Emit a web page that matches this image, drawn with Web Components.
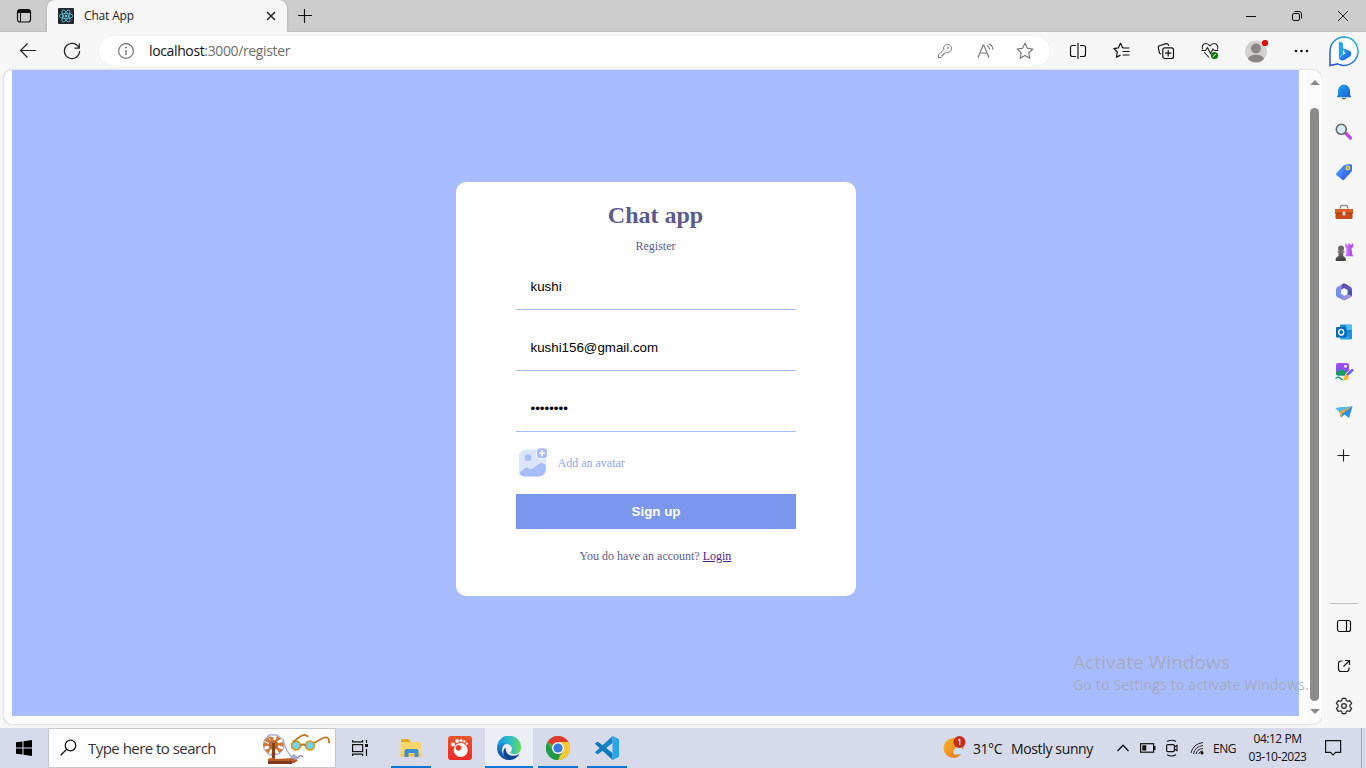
<!DOCTYPE html>
<html lang="en">
<head>
<meta charset="utf-8">
<title>Chat App</title>
<style>
html,body{margin:0;height:100%;overflow:hidden}
body{font-family:"Open Sans","Noto Sans",sans-serif;color:#1b1b1b}
</style>
</head>
<body>
<desktop-screen></desktop-screen>
<script>
const ICONS = {
  workspaces:[16,16,`<rect x="1.5" y="1.5" width="13" height="12.5" rx="2.5" fill="none" stroke="#111" stroke-width="1.2"/><path d="M1.5 5V4a2.500 2.500 0 0 1 2.500-2.500h8A2.500 2.500 0 0 1 14.500 4v1z" fill="#111"/><path d="M4.500 5v9" stroke="#111"/>`],
  react:[16,16,`<rect width="16" height="16" rx="1" fill="#22252b"/><g fill="none" stroke="#5ccbe8" stroke-width=".8"><ellipse cx="8" cy="8" rx="6.800" ry="2.600"/><ellipse cx="8" cy="8" rx="6.800" ry="2.600" transform="rotate(60 8 8)"/><ellipse cx="8" cy="8" rx="6.800" ry="2.600" transform="rotate(120 8 8)"/></g><circle cx="8" cy="8" r="1.300" fill="#5ccbe8"/>`],
  close:[10,10,`<path d="M1 1l8 8M9 1L1 9" stroke="#111" stroke-width="1.200"/>`],
  plus:[14,14,`<path d="M6.500 0v14M0 6.500h14" stroke="#111" stroke-width="1.100"/>`],
  minimize:[12,12,`<path d="M1 6.500h10" stroke="#111"/>`],
  restore:[12,12,`<rect x="1.500" y="3.500" width="7" height="7" rx="1.500" fill="none" stroke="#111"/><path d="M3.500 1.500H8a2.500 2.500 0 0 1 2.500 2.500v4.500" fill="none" stroke="#111"/>`],
  winclose:[12,12,`<path d="M1 1l10 10M11 1L1 11" stroke="#111"/>`],
  back:[18,16,`<path d="M17 7.500H2M8.500.5l-7 7 7 7" fill="none" stroke="#222" stroke-width="1.150"/>`],
  reload:[18,18,`<path d="M15.800 5.500A7.600 7.600 0 1 0 16.600 9M16.300 1.500v4.700h-4.800" fill="none" stroke="#222" stroke-width="1.250"/>`],
  info:[18,18,`<circle cx="9" cy="9" r="7.400" fill="none" stroke="#6b6b6b" stroke-width="1.100"/><path d="M9 8v5" stroke="#6b6b6b" stroke-width="1.300"/><circle cx="9" cy="5.500" r=".9" fill="#6b6b6b"/>`],
  key:[16,16,`<path d="M8.800 1.900a4 4 0 1 1 1.400 7.600l-.9-.3-1 1.200H6.700V12H5v1.700l-.8.800H1.500v-2.700l5.100-5.100A4 4 0 0 1 8.800 1.900z" fill="none" stroke="#7b7b7b" stroke-linejoin="round"/><circle cx="11" cy="5" r=".9" fill="#7b7b7b"/>`],
  read:[18,16,`<path d="M2 14.500L7.200 2h.6L13 14.500M3.800 10h7.400" fill="none" stroke="#777" stroke-width="1.150"/><path d="M11 2.500c1.600.7 2.500 2.100 2.600 4M12.700.8c2.700 1.100 4.100 3.200 4.200 5.900" fill="none" stroke="#777" stroke-width="1.100"/>`],
  star:[18,18,`<path d="M9 1.300l2.400 5 5.400.7-4 3.800 1 5.500L9 13.600l-4.800 2.700 1-5.500-4-3.800 5.400-.7z" fill="none" stroke="#707070" stroke-linejoin="round" stroke-width="1.100"/>`],
  split:[18,18,`<path d="M7 3.500H3.500a2 2 0 0 0-2 2v7a2 2 0 0 0 2 2H7M9 1v16M11 3.500h3.500a2 2 0 0 1 2 2v7a2 2 0 0 1-2 2H11" fill="none" stroke="#111" stroke-width="1.150"/>`],
  favs:[18,18,`<path d="M16.500 6H11l-1.300-.3L7.500 1.300 5.300 5.900l-4.400.7 3.400 3.400-.8 5.200 4-2.100" fill="none" stroke="#111" stroke-linejoin="round" stroke-width="1.200"/><path d="M9.500 9.500h7M9.500 13h7" stroke="#111" stroke-width="1.200"/>`],
  collections:[18,18,`<rect x="5.800" y="5.800" width="10.700" height="10.700" rx="2" fill="none" stroke="#111" stroke-width="1.200"/><path d="M11.200 8v6.400M8 11.200h6.400M4 12l-1.500-.8L1.300 5.700c-.2-1 .2-1.800 1.200-2l6.600-2c1.200-.2 1.900.2 2.200 1.200l.3 1" fill="none" stroke="#111" stroke-width="1.200"/>`],
  heart:[20,20,`<path d="M2.500 8.500c-1.200-3 .6-6 3.400-6C8 2.500 9 3.800 10 5c1-1.200 2-2.500 4.100-2.500 3 0 4.600 3.200 3.400 6M4 11l5 5.500" fill="none" stroke="#222" stroke-width="1.100"/><path d="M1.500 9.500h4l2-3 3 6L13 8l1.300 1.500h4" fill="none" stroke="#222" stroke-width="1.100"/><circle cx="14.500" cy="14.500" r="3.600" fill="#0f7b0f"/><path d="M12.900 15.700l3-2.600" fill="none" stroke="#fff"/>`],
  profile:[26,26,`<defs><clipPath id="c"><circle cx="13" cy="13.500" r="11"/></clipPath></defs><circle cx="13" cy="13.500" r="11" fill="#d2d0ce"/><g clip-path="url(#c)" fill="#8a8886"><circle cx="13" cy="10.500" r="5"/><ellipse cx="13" cy="21.500" rx="8" ry="4.800"/></g><circle cx="22" cy="5" r="3.100" fill="#e60000"/>`],
  dots:[16,4,`<g fill="#111"><circle cx="3" cy="2" r="1.300"/><circle cx="8.500" cy="2" r="1.300"/><circle cx="14" cy="2" r="1.300"/></g>`],
  bing:[32,34,`<defs><linearGradient id="g" x1="1" x2="0" y2="1"><stop stop-color="#25b7e8"/><stop offset="1" stop-color="#2b4fd0"/></linearGradient><linearGradient id="h" x2="1" y2="1"><stop stop-color="#35b5f5"/><stop offset="1" stop-color="#1554e0"/></linearGradient></defs><path d="M16 2a14.200 14.200 0 1 1-6.500 26.900L2 30.500V16A14.200 14.200 0 0 1 16 2z" fill="#fff" stroke="url(#g)" stroke-width="1.500"/><path d="M10.800 6.200l4.200 1.800v11.500l-4.200 3z" fill="#25a5ee"/><path d="M10.800 22.500l4.200-2.800 3-1.600-2-1-1.600-4 6.600 2.500c3 1.300 3 4.900.4 6.300l-6 3.500c-2 .8-4.400-.9-4.400-2.900z" fill="url(#h)"/>`],
  bell:[16,18,`<defs><linearGradient id="g" x2="1" y2="1"><stop stop-color="#23a9f0"/><stop offset="1" stop-color="#1660d8"/></linearGradient></defs><path d="M2 8a6 6.500 0 0 1 12 0v3.500l1 2v.8H1v-.8l1-2z" fill="url(#g)"/><path d="M5.500 15h5a2.600 1.900 0 0 1-5 0z" fill="#5d5d5d"/>`],
  search:[18,18,`<path d="M11 10.500l4.500 4.500" stroke="#bd45ef" stroke-width="3.200" stroke-linecap="round"/><circle cx="6.300" cy="6.300" r="5" fill="#d3eefb" stroke="#666" stroke-width="1.600"/>`],
  tag:[18,18,`<defs><linearGradient id="g" x2="1" y2="1"><stop stop-color="#4eb1ff"/><stop offset="1" stop-color="#3346ef"/></linearGradient></defs><path d="M9 2l6.500-1 1.500.8V8l-7.800 8.800c-.6.600-1.300.6-2 0L1.500 12c-.6-.6-.6-1.400 0-2z" fill="url(#g)"/><circle cx="13" cy="5" r="1.600" fill="#4069c8" stroke="#fbd936" stroke-width="1.500"/>`],
  toolbox:[20,18,`<path d="M6.500 5.500v-2a1 1 0 0 1 1-1h5a1 1 0 0 1 1 1v2" fill="none" stroke="#929292" stroke-width="1.500"/><rect x="1.500" y="6" width="17" height="10" rx="1.300" fill="#cc4817"/><path d="M1 6h18v4H1z" fill="#e25c26"/><path d="M1 10.100h18" stroke="#8f2c0c" stroke-width=".8"/><rect x="8.500" y="8.500" width="3" height="4" rx="1" fill="#c8d4d9"/>`],
  games:[20,20,`<defs><linearGradient id="g" x2="0" y2="1"><stop stop-color="#7a7a7a"/><stop offset="1" stop-color="#3b3b3b"/></linearGradient><linearGradient id="h" x2="1"><stop stop-color="#d68bff"/><stop offset="1" stop-color="#a438ee"/></linearGradient></defs><path d="M11 1.500h1.700V3h1.500V1.500h1.900V3h1.500V1.500H19V5l-1.500 1.200.6 5.800 1 2.200h-8l1-2.200.4-5.800L11 5z" fill="url(#h)"/><circle cx="7" cy="6.500" r="3" fill="#666"/><path d="M3.500 9h7v1.400H9.300v3.300l2.200 2.300q1 3-.5 3H2.500q-1.500 0-.5-3l2.500-2.300v-3.300h-1z" fill="url(#g)"/>`],
  m365:[18,18,`<defs><linearGradient id="a" x2="0" y2="1"><stop stop-color="#9a86e6"/><stop offset="1" stop-color="#5c9be8"/></linearGradient><linearGradient id="b" x2="1" y2="1"><stop stop-color="#4f46a8"/><stop offset="1" stop-color="#7a63cf"/></linearGradient><linearGradient id="d" x2="1"><stop stop-color="#5b8fe6"/><stop offset="1" stop-color="#c58de6"/></linearGradient></defs><path d="M8.600.6L6.400 6.200V10L1 12.600V6q0-1.400 1.200-2.100L7.400.9z" fill="url(#a)"/><path d="M7.600.8Q9 .1 10.400.8l5.400 3.100Q17 4.600 17 6v4.700l-4.900-3.600L8.900 5.200 6 6.800z" fill="url(#b)"/><path d="M17 7v5q0 1.400-1.200 2.100l-4.300 2.500 1-4.400V7.300z" fill="#45559c"/><path d="M1 12.300l5.300-2.400 2.800 2.900 3.600-1.500L16.600 13l-.8 1-5.400 3.100q-1.400.7-2.800 0l-5.400-3.100q-.9-.5-1.200-1.700z" fill="url(#d)"/><path d="M9.200 5.300l3 1.800v3.700L9.200 12.600 6.200 10.800V7.100z" fill="#f7f7f7"/>`],
  outlook:[18,18,`<rect x="5" y="1.500" width="12" height="14.500" rx="1" fill="#138bd4"/><path d="M11 2h6v5h-6z" fill="#46c4f4"/><path d="M5 8l6 4 6-4v7.500q0 1-1 1H6q-1 0-1-1z" fill="#28a8ea"/><path d="M11 12l6-4v8z" fill="#1f93d8"/><rect x="1" y="4" width="10.500" height="10.500" rx="1" fill="#0968ba"/><ellipse cx="6.200" cy="9.200" rx="2.500" ry="2.800" fill="none" stroke="#fff" stroke-width="1.400"/>`],
  designer:[20,20,`<defs><linearGradient id="g" x2="0" y2="1"><stop stop-color="#a44ff2"/><stop offset="1" stop-color="#6c55e8"/></linearGradient></defs><rect x="2" y="1" width="13" height="12.500" rx="2" fill="url(#g)"/><circle cx="11.500" cy="4.300" r="1.400" fill="#fff"/><path d="M2 11l4-3.200q1.300-1 2.600 0L13 11.500l-2.500 2H4q-2 0-2-2z" fill="#169b65"/><path d="M1.500 16.500q2.500-2.500 4-.7t3.500 1.700" fill="none" stroke="#20a871" stroke-width="1.400"/><path d="M13 13L18.300 8.200" stroke="#f7f7f7" stroke-width="4" stroke-linecap="round"/><path d="M13 13L18.300 8.200" stroke="#6d62e9" stroke-width="2.500" stroke-linecap="round"/><path d="M12 11.800l3 3c-.8 3-3.200 4-6 3.700 1.300-1 .8-4.900 3-6.700z" fill="#fbb52b"/>`],
  plane:[18,18,`<path d="M.5 5l17-1.500L14 15l-4.500-3.500-3.700 3.300-.8-5z" fill="#2b8ee8"/><path d="M.5 5l17-1.500L5 9.300z" fill="#53b9f5"/><path d="M17.500 3.500L4.300 8.700l1.500 6 1.800-4.500z" fill="#f4a72b"/>`],
  addapp:[14,14,`<path d="M6.500.5v12M.5 6.500h12" stroke="#222" stroke-width="1.100"/>`],
  sidepanel:[16,16,`<rect x="1.500" y="2.500" width="13" height="11" rx="2" fill="none" stroke="#111" stroke-width="1.200"/><path d="M10.500 2.500v11" stroke="#111" stroke-width="1.200"/>`],
  open:[16,16,`<path d="M6.500 3H5a2.500 2.500 0 0 0-2.500 2.500V11A2.500 2.500 0 0 0 5 13.500h5.500A2.500 2.500 0 0 0 13 11V9.500M9 2.500h4.500V7M13.500 2.500L7.500 8.500" fill="none" stroke="#111" stroke-width="1.200"/>`],
  gear:[18,18,`<path d="M7.300 1.300h3.400l.5 2.200 1.400.8 2.200-.7 1.800 3-1.700 1.500v1.800l1.700 1.500-1.800 3-2.200-.7-1.400.8-.5 2.200H7.300l-.5-2.200-1.400-.8-2.200.7-1.800-3 1.700-1.500V8.100L1.400 6.600l1.800-3 2.200.7 1.400-.8z" fill="none" stroke="#222" stroke-width="1.200" stroke-linejoin="round"/><circle cx="9" cy="9" r="2.300" fill="none" stroke="#222" stroke-width="1.200"/>`],
  avatar:[32,32,`<rect x="3" y="2.500" width="27" height="27" rx="7" fill="#dce5ff"/><path d="M3 26l6.500-5q1.800-1 3.500.5t4-.3l6.500-4.700q2-1.200 4 0l2.200 1.500V22.500a7 7 0 0 1-7 7H10a7 7 0 0 1-7-3.500z" fill="#a7bcff"/><circle cx="12" cy="10.800" r="3.300" fill="#a7bcff"/><rect x="20.500" y=".800" width="11" height="11" rx="3.500" fill="#a7bcff" stroke="#fff"/><path d="M26 3.300v6M23 6.300h6" stroke="#fff" stroke-width="1.600"/>`],
  windows:[16,16,`<path d="M0 2.300l6.500-.9v6.100H0zM7.500 1.300L16 0v7.500H7.500zM0 8.500h6.500v6.100L0 13.700zM7.500 8.500H16V16l-8.500-1.300z" fill="#000"/>`],
  lens:[18,18,`<circle cx="10.500" cy="6.500" r="5.300" fill="none" stroke="#111" stroke-width="1.200"/><path d="M6.700 10.300l-6 6" stroke="#111" stroke-width="1.300"/>`],
  charkha:[70,32,`<g stroke="#aab3d5" stroke-width="1.300" fill="none"><path d="M8 2l8 0 6 5 1 8-5 6-9 1-6-6V8z"/><path d="M22 6q3 13 9 18"/></g><g fill="#cf7a3c"><path d="M11 10L7 3l6 1.500zM13 10l3-7 4 3zM14 11l8-2 .5 5zM14 13l8 4-4 3zM13 14l2 8-5-.5zM11 14l-4 7-3-4zM10 12l-8 2 .500-5zM11 11L3 8l4-4z"/></g><circle cx="12.500" cy="12" r="5" fill="#c06c31"/><path d="M11 10h3v17h-3z" fill="#874019"/><path d="M7 26q4-2 8 0l18-1q3 1 4 2.500l-4 2.500H7z" fill="#b95b25"/><path d="M7 28h24v3H7z" fill="#81391d"/><path d="M29 24l4-3 5 4-4 2z" fill="#a3a4d8"/><path d="M37 25q2-4 5-1" fill="none" stroke="#9984ba" stroke-width="1.300"/><g fill="#73d4f2" stroke="#d29b22" stroke-width="1.800"><circle cx="35" cy="12.500" r="4.400"/><circle cx="49" cy="12.500" r="4.400"/></g><path d="M39.500 12.500q2.500-2 5 0M32 9l8-6q5-2.500 7 1M53 10L62 5q6-2 6 3v2" fill="none" stroke="#b97a2a" stroke-width="1.800"/>`],
  taskview:[18,18,`<g fill="none" stroke="#111" stroke-width="1.200"><rect x="1.600" y="5.600" width="10" height="7"/><path d="M1.600 1v1.900h10V1M1.600 17v-1.900h10V17M15.500 1v3M15.500 10v7"/></g><path d="M14 5h3v3h-3z" fill="#111"/>`],
  explorer:[24,24,`<path d="M2 4.500q0-1.500 1.500-1.500h6L11.500 6v4H2z" fill="#dea51f"/><path d="M1.500 6H21q1.500 0 1.500 1.500v13H1.500z" fill="#fbd668"/><path d="M1.500 18h21v2.500h-21z" fill="#f6c64c"/><path d="M5.500 21v-6q0-2 2-2h10q2 0 2 2v6h-4v-4h-6v4z" fill="#3a8fd5"/>`],
  gom:[24,24,`<defs><linearGradient id="g" x2="0" y2="1"><stop stop-color="#ee5527"/><stop offset="1" stop-color="#ee2828"/></linearGradient></defs><rect width="24" height="24" rx="3" fill="url(#g)"/><g fill="#fff"><circle cx="12.700" cy="14" r="7"/><circle cx="5" cy="8.500" r="2"/><circle cx="9" cy="5" r="1.900"/><circle cx="13" cy="4.500" r="1.600"/><circle cx="16.300" cy="5.500" r="1.300"/><circle cx="18.800" cy="7.700" r="1.100"/></g><circle cx="10.500" cy="11.700" r="2.800" fill="#ee3d2b"/>`],
  edge:[24,24,`<defs><linearGradient id="g" x2="1"><stop stop-color="#1893dd"/><stop offset=".55" stop-color="#2bbfc9"/><stop offset="1" stop-color="#66da58"/></linearGradient><linearGradient id="h" x2="0" y2="1"><stop stop-color="#1788d4"/><stop offset="1" stop-color="#0f4ba0"/></linearGradient></defs><path d="M0 11A12 12 0 0 1 24 12c0 4-3 6-6.500 6-3 0-4.500-1-3.600-2.300 2.700-4-.4-7.700-4.400-7.700C5 8 1.500 9.500 0 11z" fill="url(#g)"/><path d="M0 12C1 8.500 5 6.800 9 7.500c-3.400 2-4.500 5-3.700 8.600 1 4 4.500 6.800 8.200 7.800A12 12 0 0 1 0 12z" fill="url(#h)"/><path d="M8.800 11.500c-1.200 4.500 3 9 8.200 8.300 2-.2 3.700-.8 5.500-1.800A12 12 0 0 1 13 24C6 22.600 4.200 15 8.800 11.500z" fill="#0c458f"/>`],
  chrome:[24,24,`<circle cx="12" cy="12" r="12" fill="#4caf50"/><path d="M12 12L1.600 6A12 12 0 0 1 22.400 6z" fill="#e33b2e"/><path d="M12 6h10.400A12 12 0 0 1 12 24l5.200-9z" fill="#fcc934"/><path d="M1.600 6l5.200 9 5.200 3 2-.3L12 24A12 12 0 0 1 1.600 6z" fill="#23994b"/><circle cx="12" cy="12" r="6" fill="#fff"/><circle cx="12" cy="12" r="4.600" fill="#3478e5"/>`],
  vscode:[24,24,`<path d="M17.500 0v7L3 18.300l-1.500-.5L0 16.300z" fill="#1483c8"/><path d="M17.500 24v-7L3 5.700l-1.500.5L0 7.700z" fill="#087abd"/><path d="M17.500 0L24 3v18l-6.500 3z" fill="#28a6ec"/>`],
  weather:[24,24,`<defs><linearGradient id="g" x2="1" y2="1"><stop stop-color="#f8b52e"/><stop offset="1" stop-color="#e87412"/></linearGradient></defs><circle cx="10.500" cy="12" r="10" fill="url(#g)"/><path d="M12 18.500a3 3 0 0 1 0-5.500 4 4 0 0 1 7.500.3 2.700 2.700 0 0 1 1 5.200z" fill="#cae1fa"/><circle cx="16.500" cy="6" r="6" fill="#c42b1c"/><path d="M15 4.300L16.800 3v6" fill="none" stroke="#fff"/>`],
  chevron:[14,10,`<path d="M1.500 8L7 2.300 12.500 8" fill="none" stroke="#111" stroke-width="1.300"/>`],
  battery:[16,10,`<rect x=".600" y=".700" width="13" height="8.500" fill="none" stroke="#111" stroke-width="1.200"/><path d="M2.300 2.300h4v5.300h-4zM14 3h1.500v4H14z" fill="#111"/>`],
  meet:[14,18,`<rect x="1.600" y="5.600" width="7.800" height="7" rx="1.300" fill="none" stroke="#111" stroke-width="1.200"/><path d="M9.500 8l2.500-1.700v5.500L9.500 10M2 2.500q5-2.500 9 0M2 15.700q5 2.500 9 0" fill="none" stroke="#111" stroke-width="1.100"/>`],
  wifi:[14,14,`<g fill="none" stroke="#222" stroke-width="1"><path d="M1 12Q3 3 13 1.500M3.500 13Q5 5.500 13 4.500M6 13q1-5 7-5.500M8.500 13q.8-2.700 4.500-3"/></g><circle cx="12" cy="12" r="1.500" fill="#111"/>`],
  notify:[18,18,`<path d="M1.600 1.600h15v11.800h-5L9 16l-2.500-2.600H1.600z" fill="none" stroke="#111" stroke-width="1.200"/>`]
};

/* Shared base: every component renders its own template into an open root. */
class Base extends HTMLElement{
  connectedCallback(){
    if(this.shadowRoot) return;
    const t=document.createElement('template');
    t.innerHTML=this.render();
    this.attachShadow({mode:'open'}).append(t.content.cloneNode(true));
    this.ready?.();
  }
}
customElements.define('ui-icon',class extends Base{
  render(){
    const [w,h,body]=ICONS[this.getAttribute('name')];
    return `<style>:host{display:block;flex:none;width:${w}px;height:${h}px}svg{display:block}</style><svg width="${w}" height="${h}" viewBox="0 0 ${w} ${h}">${body}</svg>`;
  }
});
/* One line of text tracked so it fills the width given in "w". */
customElements.define('ui-text',class extends Base{
  render(){return `<style>:host{display:block;flex:none;white-space:nowrap;width:${this.getAttribute('w')}px}span{display:inline-block}</style><span><slot></slot></span>`}
  ready(){
    const s=this.shadowRoot.querySelector('span');
    const n=this.textContent.length;
    s.style.letterSpacing=((+this.getAttribute('w')-s.getBoundingClientRect().width)/n)+'px';
  }
});
customElements.define('icon-cell',class extends Base{
  render(){return `<style>:host{display:grid;place-items:center;flex:none;width:${this.getAttribute('w')||44}px;height:${this.getAttribute('h')||40}px}</style><ui-icon name="${this.getAttribute('name')}"></ui-icon>`}
});
customElements.define('tab-strip',class extends Base{
  render(){return `<style>
  :host{display:flex;height:32px;background:#cdcdcd;align-items:center;box-shadow:inset 0 -1px #c0c0c0}
  .tab{display:flex;align-items:center;height:32px;width:240px;margin-left:-1px;background:#f7f7f7;border-radius:8px 8px 0 0;box-sizing:border-box;padding:0 11px;font-size:12px;box-shadow:0 0 2px #999;clip-path:inset(0 -3px 0 -3px)}
  .tab ui-text{margin-left:10px;line-height:32px}.tab ui-icon:last-child{margin:0 0 0 auto}
  .end{display:flex;margin-left:auto}
  </style><icon-cell name="workspaces" w="48" h="32"></icon-cell><div class="tab"><ui-icon name="react"></ui-icon><ui-text w="50">Chat App</ui-text><ui-icon name="close"></ui-icon></div><icon-cell name="plus" w="36" h="32"></icon-cell><div class="end"><icon-cell name="minimize" w="46" h="32"></icon-cell><icon-cell name="restore" w="46" h="32"></icon-cell><icon-cell name="winclose" w="46" h="32"></icon-cell></div>`}
});
customElements.define('address-bar',class extends Base{
  render(){return `<style>
  :host{display:flex;align-items:center;width:951px;height:30px;border-radius:15px;background:#fff;box-shadow:0 0 1px #ddd;box-sizing:border-box;padding:0 5px 0 18px;flex:none;font-size:14px;color:#6d6d6d}
  ui-text{margin-left:14px;line-height:30px}b{font-weight:400;color:#111}.end{display:flex;margin-left:auto}
  </style><ui-icon name="info"></ui-icon><ui-text w="141"><b>localhost</b>:3000/register</ui-text><div class="end"><icon-cell name="key" w="40" h="30"></icon-cell><icon-cell name="read" w="40" h="30"></icon-cell><icon-cell name="star" w="40" h="30"></icon-cell></div>`}
});
customElements.define('tool-bar',class extends Base{
  render(){return `<style>
  :host{display:flex;align-items:center;height:38px;box-sizing:border-box;padding-left:6px;background:#f7f7f7}
  address-bar{margin:0 5px 0 5px}
  </style><icon-cell name="back" h="38"></icon-cell><icon-cell name="reload" h="38"></icon-cell><address-bar></address-bar><icon-cell name="split" w="45" h="38"></icon-cell><icon-cell name="favs" h="38"></icon-cell><icon-cell name="collections" h="38"></icon-cell><icon-cell name="heart" h="38"></icon-cell><icon-cell name="profile" w="48" h="38"></icon-cell><icon-cell name="dots" w="42" h="38"></icon-cell>`}
});
customElements.define('form-field',class extends Base{
  render(){return `<style>:host{display:block;height:50px;border-bottom:1px solid #a7bcff;padding:0 15px;font:13.333px/55px "Liberation Sans",Arial,sans-serif;color:#000}</style><slot></slot>`}
});
customElements.define('register-card',class extends Base{
  render(){return `<style>
  :host{display:flex;flex-direction:column;width:400px;height:414px;box-sizing:border-box;padding:20px 60px;background:#fff;border-radius:10px;font:12px "Liberation Serif","Times New Roman",serif;color:#5d5b8d}
  h1{margin:0;font-size:24px;line-height:27px;text-align:center}
  .sub{line-height:14px;margin:10px 0 6px;text-align:center}
  form-field{margin-bottom:10px}
  .avatar{display:flex;align-items:center;gap:10px;height:32px;margin-top:5px;color:#8da4f1}
  button{display:block;border:0;margin:15px 0 0;height:35px;padding:0 0 0 1px;background:#7b96ec;color:#fff;font:bold 13.333px "Liberation Sans",Arial,sans-serif}
  p{margin:20px 0 0;line-height:14px;text-align:center}a{color:#551a8b}
  </style><h1>Chat app</h1><div class="sub">Register</div><form-field>kushi</form-field><form-field>kushi156@gmail.com</form-field><form-field>••••••••</form-field><div class="avatar"><ui-icon name="avatar"></ui-icon><span>Add an avatar</span></div><button>Sign up</button><p>You do have an account? <a href="#">Login</a></p>`}
});
customElements.define('scroll-track',class extends Base{
  render(){return `<style>:host{display:flex;flex-direction:column;align-items:center;width:15px;box-sizing:border-box;padding:10px 0 10px;background:#fcfcfc}
  i{display:block;border:5px solid transparent;border-top:0;border-bottom:5px solid #8b8b8b}
  i.d{border-top:5px solid #8b8b8b;border-bottom:0}
  div{flex:1;width:9px;border-radius:5px;background:#8b8b8b;margin:23px 0 8px}</style><i></i><div></div><i class="d"></i>`}
});
customElements.define('web-page',class extends Base{
  render(){return `<style>
  :host{display:flex;margin-left:4px;width:1318px;height:654px;background:#fff;border-radius:8px 10px 10px 8px;box-shadow:0 0 2px #aaa;overflow:hidden}
  main{display:flex;justify-content:center;align-items:flex-start;box-sizing:border-box;width:1287px;height:646px;margin:0 8px;padding-top:112px;background:#a7bcff}
  </style><main><register-card></register-card></main><scroll-track></scroll-track>`}
});
customElements.define('side-bar',class extends Base{
  render(){
    const cell=n=>`<icon-cell name="${n}"></icon-cell>`;
    return `<style>:host{display:flex;flex-direction:column;width:44px;background:#f7f7f7}
    .top{margin-bottom:4px}hr{width:28px;height:1px;border:0;background:#bdbdbd;margin:auto 8px 2px}.end{padding-bottom:2px}</style>
    <icon-cell name="bing" h="40"></icon-cell><div class="top">${['bell','search','tag','toolbox','games','m365','outlook','designer','plane'].map(cell).join('')}</div>${cell('addapp')}<hr><div class="end">${['sidepanel','open','gear'].map(cell).join('')}</div>`}
});
customElements.define('task-app',class extends Base{
  render(){const on=this.hasAttribute('active');const run=this.hasAttribute('running');
  return `<style>:host{display:flex;flex-direction:column;align-items:center;justify-content:space-between;width:49px;height:40px;background:${on?'linear-gradient(90deg,transparent 1px,#eceef6 1px)':'none'};flex:none}ui-icon{margin-top:8px}i{height:2px;width:${on?'48px;align-self:flex-end':'40px'};background:${run?'#0b76d4':'none'}}</style><ui-icon name="${this.getAttribute('name')}"></ui-icon><i></i>`}
});
customElements.define('search-box',class extends Base{
  render(){return `<style>:host{display:flex;align-items:center;width:288px;height:40px;box-sizing:border-box;border:1px solid #c4c6cc;background:#fff;padding:0 4px 0 11px;font-size:15px;color:#333;flex:none}ui-text{margin-left:10px}ui-icon:last-child{margin-left:auto;margin-top:1px}</style><ui-icon name="lens"></ui-icon><ui-text w="128">Type here to search</ui-text><ui-icon name="charkha"></ui-icon>`}
});
customElements.define('task-bar',class extends Base{
  render(){return `<style>
  :host{display:flex;align-items:center;height:40px;background:#d6daea;font-size:14px;color:#111}
  .apps{display:flex;margin-left:2px}.tray{display:flex;align-items:center;margin-left:auto}
  .temp{margin-left:6px}.cond{margin:0 18px 0 9px}.lang{font-size:12px;margin-left:4px}
  .clock{font-size:12px;line-height:18px;width:59px;display:grid;justify-items:center;margin:0 2px 0 12px}
  .edge{width:4px;height:40px;border-left:1px solid #9fa4b5;margin-left:4px}
  </style><icon-cell name="windows" w="48"></icon-cell><search-box></search-box><icon-cell name="taskview" w="48"></icon-cell><div class="apps"><task-app name="explorer" running></task-app><task-app name="gom"></task-app><task-app name="edge" active running></task-app><task-app name="chrome" running></task-app><task-app name="vscode" running></task-app></div>
  <div class="tray"><ui-icon name="weather"></ui-icon><ui-text class="temp" w="29">31°C</ui-text><ui-text class="cond" w="82">Mostly sunny</ui-text><icon-cell name="chevron" w="24"></icon-cell><icon-cell name="battery" w="25"></icon-cell><icon-cell name="meet" w="24"></icon-cell><icon-cell name="wifi" w="25"></icon-cell><ui-text class="lang" w="23">ENG</ui-text><div class="clock"><ui-text w="48">04:12 PM</ui-text><ui-text w="58">03-10-2023</ui-text></div><icon-cell name="notify" w="48"></icon-cell><div class="edge"></div></div>`}
});
customElements.define('activation-notice',class extends Base{
  render(){return `<style>:host{position:absolute;left:1073px;top:649px;color:rgba(165,165,172,.75)}.a{font-size:19px;line-height:26px}.b{font-size:14px;line-height:20px}</style><ui-text class="a" w="157">Activate Windows</ui-text><ui-text class="b" w="236">Go to Settings to activate Windows.</ui-text>`}
});
customElements.define('desktop-screen',class extends Base{
  render(){return `<style>
  :host{display:flex;flex-direction:column;width:1366px;height:768px;overflow:hidden;background:#f7f7f7;position:relative}
  .body{display:flex;height:696px}.left{width:1322px}
  </style><tab-strip></tab-strip><div class="body"><div class="left"><tool-bar></tool-bar><web-page></web-page></div><side-bar></side-bar></div><task-bar></task-bar><activation-notice></activation-notice>`}
});
</script>
</body>
</html>
